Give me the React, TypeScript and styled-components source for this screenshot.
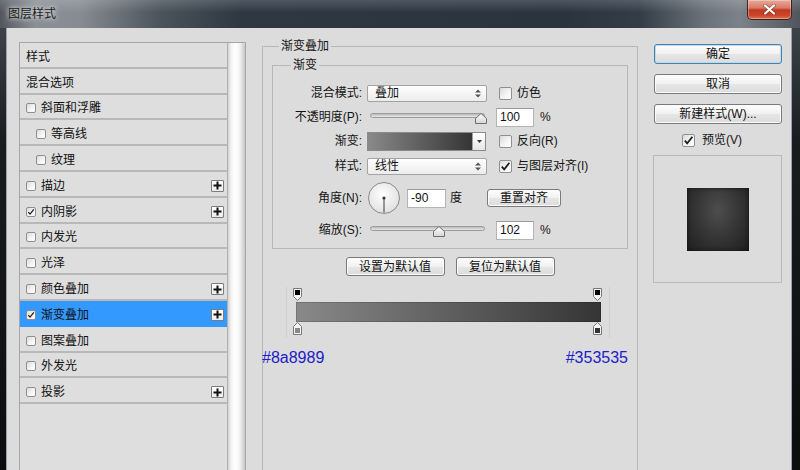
import React from "react";
import styled, { createGlobalStyle } from "styled-components";

const FONT = `"Liberation Sans", "Noto Sans CJK SC", sans-serif`;

const GlobalStyle = createGlobalStyle`
  * { box-sizing: border-box; }
  html, body { margin: 0; padding: 0; width: 800px; height: 470px; overflow: hidden; background: #111; }
  #root { width: 800px; height: 470px; }
`;

const Window = styled.div`
  width: 800px;
  height: 470px;
  display: flex;
  flex-direction: column;
  overflow: hidden;
  font-family: ${FONT};
  font-size: 12px;
  color: #141414;
`;

const TitleBar = styled.div`
  flex: none;
  height: 28px;
  display: flex;
  align-items: flex-start;
  padding-left: 8px;
  background:
    linear-gradient(to bottom, rgba(255,255,255,0.16), rgba(255,255,255,0) 45%),
    linear-gradient(to right, #50565d 0px, #8a8f95 35px, #878c92 80px, #4b535b 160px, #2f3842 240px, #2b343e 560px, #343d47 640px, #6b727a 705px, #7c8289 740px, #50565d 800px);
`;

const TitleText = styled.span`
  margin-top: 7px;
  font: 12px/14px ${FONT};
  color: #1b1b1b;
  text-shadow: 0 0 4px rgba(255,255,255,0.9), 0 0 8px rgba(255,255,255,0.55);
`;

const CloseButton = styled.div`
  margin-left: auto;
  margin-right: 8px;
  width: 45px;
  height: 20px;
  border: 1px solid #4b1f19;
  border-top: none;
  border-radius: 0 0 5px 5px;
  background: linear-gradient(to bottom, #e9a999 0%, #d67a67 42%, #c13a22 52%, #c8452b 80%, #dd7356 100%);
  box-shadow: inset 0 0 0 1px rgba(255,255,255,0.3);
  display: flex;
  align-items: center;
  justify-content: center;
`;

const FrameBody = styled.div`
  flex: 1;
  display: flex;
  min-height: 0;
  padding: 0 8px 0 6px;
  background: linear-gradient(to bottom, #3d434a 0%, #1a1d20 25%, #0b0c0e 100%);
`;

const Client = styled.div`
  flex: 1;
  display: flex;
  align-items: flex-start;
  gap: 16px;
  padding: 11px 9px 0 12px;
  background: #dcdcdc;
  border-left: 1px solid #9aa0a6;
  border-right: 1px solid #9aa0a6;
  overflow: hidden;
`;

/* ---------- left list ---------- */

const LeftPanel = styled.div`
  flex: none;
  width: 227px;
  height: 440px;
  margin-top: 3px;
  display: flex;
  border: 1px solid #a6a6a6;
  background: #dedede;
`;

const StyleList = styled.div`
  flex: 1;
  display: flex;
  flex-direction: column;
  border-right: 1px solid #b0b0b0;
`;

const ListRow = styled.div<{ $selected?: boolean; $indent: number }>`
  flex: none;
  height: 25.8px;
  display: flex;
  align-items: center;
  gap: 5px;
  padding: 4px 3px 0 ${(p) => 6 + p.$indent}px;
  border-bottom: 2px solid ${(p) => (p.$selected ? "#3399ff" : "#b8b8b8")};
  background: ${(p) => (p.$selected ? "#3399ff" : "#dedede")};
  font: 12px/14px ${FONT};
  color: #111;
`;

const ListText = styled.span`
  flex: 1;
  white-space: nowrap;
`;

const PlusBox = styled.span`
  flex: none;
  width: 13px;
  height: 12px;
  border: 1px solid #7c7c7c;
  border-radius: 1px;
  background: linear-gradient(#ffffff, #ececec);
  display: flex;
  align-items: center;
  justify-content: center;
`;

const ScrollTrack = styled.div`
  flex: none;
  width: 17px;
  border-radius: 3px 3px 0 0;
  background: linear-gradient(to right, #d2d2d2 0, #f2f2f2 3px, #ffffff 7px, #f6f6f6 11px, #e0e0e0 14px, #c6c6c6 17px);
`;

/* ---------- checkbox ---------- */

const Box = styled.span<{ $size: number }>`
  flex: none;
  width: ${(p) => p.$size}px;
  height: ${(p) => p.$size}px;
  border: 1px solid #8e8f8f;
  border-radius: 2px;
  background: linear-gradient(135deg, #d9dbde 0%, #f4f4f4 55%, #ffffff 100%);
  display: flex;
  align-items: center;
  justify-content: center;
`;

function CheckBox({ size, checked }: { size: number; checked?: boolean }) {
  return (
    <Box $size={size}>
      {checked && (
        <svg width={size - 2} height={size - 2} viewBox="0 0 11 11">
          <path d="M1.8 5.6 L4.2 8.4 L9.4 1.8" fill="none" stroke="#1a1a1a" strokeWidth="1.7" />
        </svg>
      )}
    </Box>
  );
}

/* ---------- middle group ---------- */

const Group = styled.fieldset`
  flex: none;
  width: 376px;
  height: 440px;
  margin: 0;
  padding: 0 9px;
  min-width: 0;
  border: 1px solid #b7b7b7;
`;

const Legend = styled.legend<{ $offset: number }>`
  margin-left: ${(p) => p.$offset}px;
  padding: 0 2px;
  font: 12px/14px ${FONT};
  color: #141414;
`;

const InnerGroup = styled.fieldset`
  margin: 5px 0 0;
  padding: 0 0 8px;
  min-width: 0;
  border: 1px solid #b7b7b7;
`;

const FormRow = styled.div<{ $h?: number; $mt: number }>`
  display: flex;
  align-items: center;
  height: ${(p) => p.$h ?? 20}px;
  margin-top: ${(p) => p.$mt}px;
  line-height: 14px;
`;

const FieldLabel = styled.span`
  flex: none;
  width: 89px;
  text-align: right;
  white-space: nowrap;
`;

const Select = styled.div`
  flex: none;
  width: 120px;
  height: 17px;
  margin-left: 5px;
  display: flex;
  align-items: center;
  justify-content: space-between;
  padding: 0 5px 0 7px;
  border: 1px solid #a3a3a3;
  border-radius: 2px;
  background: linear-gradient(#ffffff, #ececec);
`;

const CheckLabel = styled.label<{ $ml: number }>`
  flex: none;
  display: flex;
  align-items: center;
  gap: 5px;
  margin-left: ${(p) => p.$ml}px;
  white-space: nowrap;
`;

const Slider = styled.div`
  position: relative;
  flex: none;
  width: 120px;
  height: 20px;
  margin-left: 5px;
`;

const SliderTrack = styled.div`
  margin: 6px 2px 0 3px;
  height: 5px;
  border-radius: 3px;
  border: 1px solid #9c9c9c;
  background: linear-gradient(#b9b9b9, #e8e8e8);
`;

const SliderThumb = styled.svg`
  position: absolute;
  top: 6px;
`;

const NumInput = styled.input<{ $w: number; $ml: number }>`
  flex: none;
  width: ${(p) => p.$w}px;
  height: 19px;
  margin: 0 0 0 ${(p) => p.$ml}px;
  padding: 0 0 0 3px;
  border: 1px solid #b4b4b4;
  border-top-color: #9c9c9c;
  background: #fff;
  font: 12px/14px ${FONT};
  color: #111;
  outline: none;
`;

const Unit = styled.span<{ $ml: number }>`
  margin-left: ${(p) => p.$ml}px;
`;

const GradientPicker = styled.div`
  flex: none;
  width: 119px;
  height: 19px;
  margin-left: 5px;
  display: flex;
  border: 1px solid #8a8a8a;
`;

const GradientSwatch = styled.div`
  flex: 1;
  background: linear-gradient(to right, #8a8989, #353535);
`;

const PickerArrow = styled.div`
  flex: none;
  width: 13px;
  border-left: 1px solid #a0a0a0;
  background: linear-gradient(#ffffff, #e6e6e6);
  display: flex;
  align-items: center;
  justify-content: center;
`;

const Dial = styled.svg`
  flex: none;
  margin-left: 6px;
`;

const PushButton = styled.button<{ $w: number; $h: number; $default?: boolean; $ml?: number }>`
  flex: none;
  width: ${(p) => p.$w}px;
  height: ${(p) => p.$h}px;
  margin: 0 0 0 ${(p) => p.$ml ?? 0}px;
  padding: 0;
  font: 12px/14px ${FONT};
  color: #111;
  border: 1px solid ${(p) => (p.$default ? "#4a7fa8" : "#7a7a7a")};
  border-radius: 3px;
  background: linear-gradient(#fdfdfd 0%, #f1f1f1 50%, #e6e6e6 51%, #dcdcdc 100%);
  box-shadow: inset 0 0 0 1px ${(p) => (p.$default ? "#b9dcf3" : "#fbfbfb")};
`;

const DefaultsRow = styled.div`
  display: flex;
  justify-content: center;
  gap: 11px;
  margin-top: 8px;
`;

const Editor = styled.div`
  position: relative;
  width: 324px;
  height: 51px;
  margin: 11px 0 0 14px;
  padding: 15px 8px 0 9px;
  border-left: 1px solid #cfcfcf;
  border-right: 1px solid #cfcfcf;
`;

const GradientBar = styled.div`
  height: 20px;
  background: linear-gradient(to right, #8a8989, #353535);
  box-shadow: inset 0 0 0 1px rgba(0,0,0,0.15);
`;

const Stop = styled.svg`
  position: absolute;
`;

const HexRow = styled.div`
  display: flex;
  justify-content: space-between;
  margin: 11px 0 0 -10px;
  font: 16px/18px "Liberation Sans", Arial, sans-serif;
  color: #2020c8;
`;

/* ---------- right column ---------- */

const RightColumn = styled.div`
  flex: none;
  width: 128px;
  margin-top: 5px;
  display: flex;
  flex-direction: column;
  gap: 10px;
`;

const PreviewCheck = styled.label`
  display: flex;
  align-items: center;
  gap: 7px;
  height: 16px;
  padding-left: 28px;
  margin-top: -2px;
  line-height: 14px;
`;

const PreviewBox = styled.div`
  width: 129px;
  height: 128px;
  margin: -3px 0 0 -1px;
  border: 1px solid #b9b9b9;
  display: flex;
  align-items: center;
  justify-content: center;
`;

const PreviewSwatch = styled.div`
  width: 62px;
  height: 63px;
  background: radial-gradient(ellipse at 50% 35%, #4e4e4e 0%, #373737 45%, #1e1e1e 100%);
  box-shadow: inset 0 0 4px rgba(0,0,0,0.6);
`;

/* ---------- data ---------- */

type Item = { label: string; cb?: boolean; checked?: boolean; indent?: number; plus?: boolean; selected?: boolean };

const ITEMS: Item[] = [
  { label: "样式" },
  { label: "混合选项" },
  { label: "斜面和浮雕", cb: true },
  { label: "等高线", cb: true, indent: 10 },
  { label: "纹理", cb: true, indent: 10 },
  { label: "描边", cb: true, plus: true },
  { label: "内阴影", cb: true, checked: true, plus: true },
  { label: "内发光", cb: true },
  { label: "光泽", cb: true },
  { label: "颜色叠加", cb: true, plus: true },
  { label: "渐变叠加", cb: true, checked: true, plus: true, selected: true },
  { label: "图案叠加", cb: true },
  { label: "外发光", cb: true },
  { label: "投影", cb: true, plus: true },
];

const STOPS = [
  { pos: 0, color: "#8a8989" },
  { pos: 1, color: "#353535" },
];

function UpDown() {
  return (
    <svg width="6" height="9" viewBox="0 0 6 9">
      <path d="M0 3.6 L3 0.4 L6 3.6 Z M0 5.4 L3 8.6 L6 5.4 Z" fill="#555" />
    </svg>
  );
}

function Thumb({ pos }: { pos: number }) {
  return (
    <SliderThumb width="12" height="11" viewBox="0 0 12 11" style={{ left: `${4 + pos * 104}px` }}>
      <defs>
        <linearGradient id="thg" x1="0" y1="0" x2="0" y2="1">
          <stop offset="0" stopColor="#ffffff" />
          <stop offset="1" stopColor="#d6d6d6" />
        </linearGradient>
      </defs>
      <path d="M0.5 10.5 V5.5 L6 0.5 L11.5 5.5 V10.5 Z" fill="url(#thg)" stroke="#6f6f6f" />
    </SliderThumb>
  );
}

export default function App() {
  return (
    <>
      <GlobalStyle />
      <Window>
        <TitleBar>
          <TitleText>图层样式</TitleText>
          <CloseButton>
            <svg width="13" height="11" viewBox="0 0 13 11">
              <path d="M2 1.5 L11 9.5 M11 1.5 L2 9.5" stroke="#5a1a10" strokeWidth="3.4" strokeLinecap="round" opacity="0.5" />
              <path d="M2 1.5 L11 9.5 M11 1.5 L2 9.5" stroke="#ffffff" strokeWidth="2.2" strokeLinecap="round" />
            </svg>
          </CloseButton>
        </TitleBar>
        <FrameBody>
          <Client>
            <LeftPanel>
              <StyleList>
                {ITEMS.map((it) => (
                  <ListRow key={it.label} $selected={it.selected} $indent={it.indent ?? 0}>
                    {it.cb && <CheckBox size={10} checked={it.checked} />}
                    <ListText>{it.label}</ListText>
                    {it.plus && (
                      <PlusBox>
                        <svg width="9" height="9" viewBox="0 0 9 9">
                          <path d="M4.5 0.5 V8.5 M0.5 4.5 H8.5" stroke="#111" strokeWidth="2" />
                        </svg>
                      </PlusBox>
                    )}
                  </ListRow>
                ))}
              </StyleList>
              <ScrollTrack />
            </LeftPanel>

            <Group>
              <Legend $offset={7}>渐变叠加</Legend>
              <InnerGroup>
                <Legend $offset={18}>渐变</Legend>
                <FormRow $mt={11}>
                  <FieldLabel>混合模式:</FieldLabel>
                  <Select>
                    <span>叠加</span>
                    <UpDown />
                  </Select>
                  <CheckLabel $ml={12}>
                    <CheckBox size={13} />
                    仿色
                  </CheckLabel>
                </FormRow>
                <FormRow $mt={4}>
                  <FieldLabel>不透明度(P):</FieldLabel>
                  <Slider>
                    <SliderTrack />
                    <Thumb pos={1} />
                  </Slider>
                  <NumInput $w={38} $ml={9} defaultValue="100" readOnly />
                  <Unit $ml={6}>%</Unit>
                </FormRow>
                <FormRow $mt={4}>
                  <FieldLabel>渐变:</FieldLabel>
                  <GradientPicker>
                    <GradientSwatch />
                    <PickerArrow>
                      <svg width="5" height="3" viewBox="0 0 5 3">
                        <path d="M0 0 H5 L2.5 3 Z" fill="#333" />
                      </svg>
                    </PickerArrow>
                  </GradientPicker>
                  <CheckLabel $ml={13}>
                    <CheckBox size={13} />
                    反向(R)
                  </CheckLabel>
                </FormRow>
                <FormRow $mt={5}>
                  <FieldLabel>样式:</FieldLabel>
                  <Select>
                    <span>线性</span>
                    <UpDown />
                  </Select>
                  <CheckLabel $ml={12}>
                    <CheckBox size={13} checked />
                    与图层对齐(I)
                  </CheckLabel>
                </FormRow>
                <FormRow $mt={6} $h={32}>
                  <FieldLabel>角度(N):</FieldLabel>
                  <Dial width="32" height="32" viewBox="0 0 32 32">
                    <defs>
                      <radialGradient id="dialg" cx="45%" cy="40%" r="60%">
                        <stop offset="0" stopColor="#ffffff" />
                        <stop offset="1" stopColor="#e0e0e0" />
                      </radialGradient>
                    </defs>
                    <circle cx="16" cy="16" r="15.5" fill="url(#dialg)" stroke="#8a8a8a" />
                    <line x1="16" y1="16" x2="16" y2="30.5" stroke="#3a3a3a" strokeWidth="1" />
                    <circle cx="16" cy="16" r="1.6" fill="#3a3a3a" />
                  </Dial>
                  <NumInput $w={39} $ml={7} defaultValue="-90" readOnly />
                  <Unit $ml={4}>度</Unit>
                  <PushButton $w={74} $h={18} $ml={25}>重置对齐</PushButton>
                </FormRow>
                <FormRow $mt={6}>
                  <FieldLabel>缩放(S):</FieldLabel>
                  <Slider>
                    <SliderTrack />
                    <Thumb pos={0.6} />
                  </Slider>
                  <NumInput $w={38} $ml={9} defaultValue="102" readOnly />
                  <Unit $ml={6}>%</Unit>
                </FormRow>
              </InnerGroup>

              <DefaultsRow>
                <PushButton $w={99} $h={19}>设置为默认值</PushButton>
                <PushButton $w={99} $h={19}>复位为默认值</PushButton>
              </DefaultsRow>

              <Editor>
                <GradientBar />
                {STOPS.map((s) => (
                  <Stop key={"t" + s.pos} width="9" height="13" viewBox="0 0 9 13" style={{ left: `${10 + s.pos * 300 - 4.5}px`, top: "1px" }}>
                    <path d="M0.5 0.5 H8.5 V8.5 L4.5 12.5 L0.5 8.5 Z" fill="#f4f4f4" stroke="#777" />
                    <rect x="2" y="2" width="5" height="5" fill="#000" />
                  </Stop>
                ))}
                {STOPS.map((s) => (
                  <Stop key={"b" + s.pos} width="9" height="13" viewBox="0 0 9 13" style={{ left: `${10 + s.pos * 300 - 4.5}px`, top: "35px" }}>
                    <path d="M0.5 12.5 H8.5 V4.5 L4.5 0.5 L0.5 4.5 Z" fill="#f4f4f4" stroke="#777" />
                    <rect x="2" y="6" width="5" height="5" fill={s.color} />
                  </Stop>
                ))}
              </Editor>

              <HexRow>
                <span>#8a8989</span>
                <span>#353535</span>
              </HexRow>
            </Group>

            <RightColumn>
              <PushButton $w={128} $h={20} $default>确定</PushButton>
              <PushButton $w={128} $h={20}>取消</PushButton>
              <PushButton $w={128} $h={20}>新建样式(W)...</PushButton>
              <PreviewCheck>
                <CheckBox size={13} checked />
                预览(V)
              </PreviewCheck>
              <PreviewBox>
                <PreviewSwatch />
              </PreviewBox>
            </RightColumn>
          </Client>
        </FrameBody>
      </Window>
    </>
  );
}
